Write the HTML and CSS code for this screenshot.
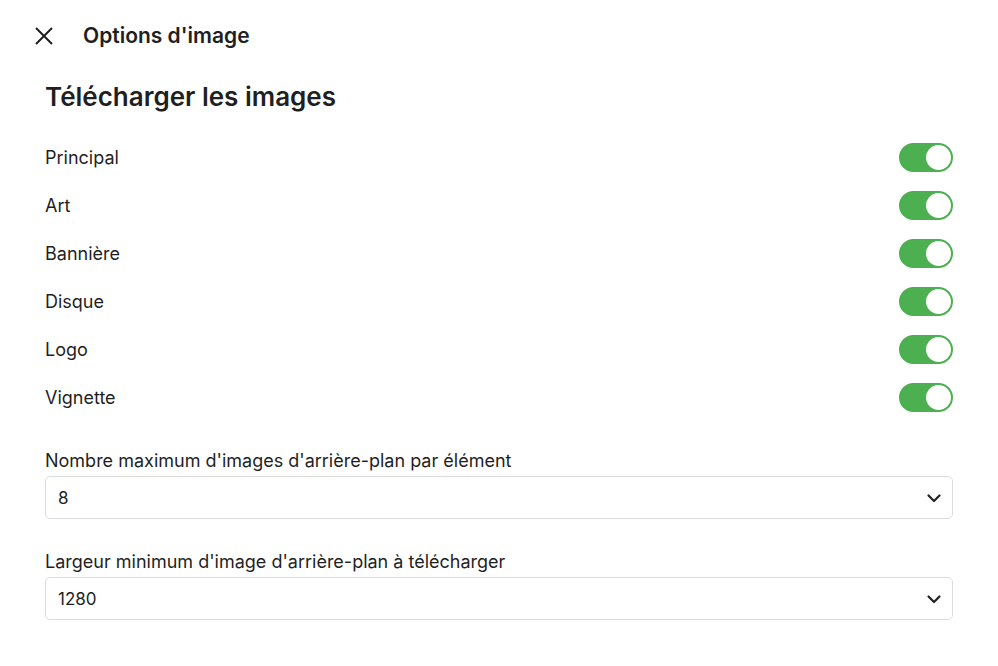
FILE: index.html
```html
<!DOCTYPE html>
<html lang="fr">
<head>
<meta charset="utf-8">
<link rel="stylesheet" href="styles.css">
</head>
<body>
<div class="page">
  <header class="topbar">
    <button class="close" aria-label="Fermer">
      <svg width="24" height="24" viewBox="0 0 24 24"><path d="M4 4 20 20M20 4 4 20" fill="none" stroke="#1f1f1f" stroke-width="2"/></svg>
    </button>
    <h1 class="title">Options d'image</h1>
  </header>
  <main class="content">
    <h2 class="section">Télécharger les images</h2>
    <div class="rows">
      <div class="row"><span>Principal</span><span class="toggle"><span class="thumb"></span></span></div>
      <div class="row"><span>Art</span><span class="toggle"><span class="thumb"></span></span></div>
      <div class="row"><span>Bannière</span><span class="toggle"><span class="thumb"></span></span></div>
      <div class="row"><span>Disque</span><span class="toggle"><span class="thumb"></span></span></div>
      <div class="row"><span>Logo</span><span class="toggle"><span class="thumb"></span></span></div>
      <div class="row"><span>Vignette</span><span class="toggle"><span class="thumb"></span></span></div>
    </div>
    <div class="field first">
      <label class="label">Nombre maximum d'images d'arrière-plan par élément</label>
      <div class="select"><span>8</span>
        <svg class="chev" width="16" height="16" viewBox="0 0 16 16"><path d="M2.5 5.5 8 11l5.5-5.5" fill="none" stroke="#222" stroke-width="2.2" stroke-linecap="round" stroke-linejoin="round"/></svg>
      </div>
    </div>
    <div class="field">
      <label class="label">Largeur minimum d'image d'arrière-plan à télécharger</label>
      <div class="select"><span>1280</span>
        <svg class="chev" width="16" height="16" viewBox="0 0 16 16"><path d="M2.5 5.5 8 11l5.5-5.5" fill="none" stroke="#222" stroke-width="2.2" stroke-linecap="round" stroke-linejoin="round"/></svg>
      </div>
    </div>
  </main>
</div>
</body>
</html>
```
FILE: styles.css
```css
* { box-sizing: border-box; }
html, body { margin: 0; background: #fff; }
body {
  font-family: Inter, "Noto Sans", sans-serif;
  color: #1f1f1f;
}
.page { width: 998px; }
.topbar {
  height: 71px;
  display: flex;
  align-items: center;
  padding-left: 32px;
}
.close {
  border: 0;
  background: none;
  padding: 0;
  width: 24px;
  height: 24px;
  display: flex;
}
.title {
  margin: 0 0 0 27px;
  font-size: 21px;
  font-weight: 600;
  color: #1f1f1f;
}
.content {
  padding: 0 45px;
}
.section {
  margin: 11px 0 21px;
  font-size: 26px;
  font-weight: 600;
  line-height: 30px;
}
.rows { display: flex; flex-direction: column; }
.row {
  height: 48px;
  display: flex;
  align-items: center;
  justify-content: space-between;
  font-size: 18px;
}
.toggle {
  width: 54px;
  height: 29px;
  border-radius: 15px;
  background: #4caf50;
  display: flex;
  align-items: center;
  justify-content: flex-end;
  padding-right: 2px;
}
.thumb {
  width: 25px;
  height: 25px;
  border-radius: 50%;
  background: #fff;
}
.field { margin-top: 32px; }
.field.first { margin-top: 29px; }
.label {
  display: block;
  font-size: 18px;
  line-height: 22px;
  margin-bottom: 4px;
}
.select {
  height: 43px;
  border: 1px solid #dcdcdc;
  border-radius: 5px;
  display: flex;
  align-items: center;
  justify-content: space-between;
  padding: 0 10px 0 12px;
  font-size: 17px;
}
.chev { display: block; }
```
